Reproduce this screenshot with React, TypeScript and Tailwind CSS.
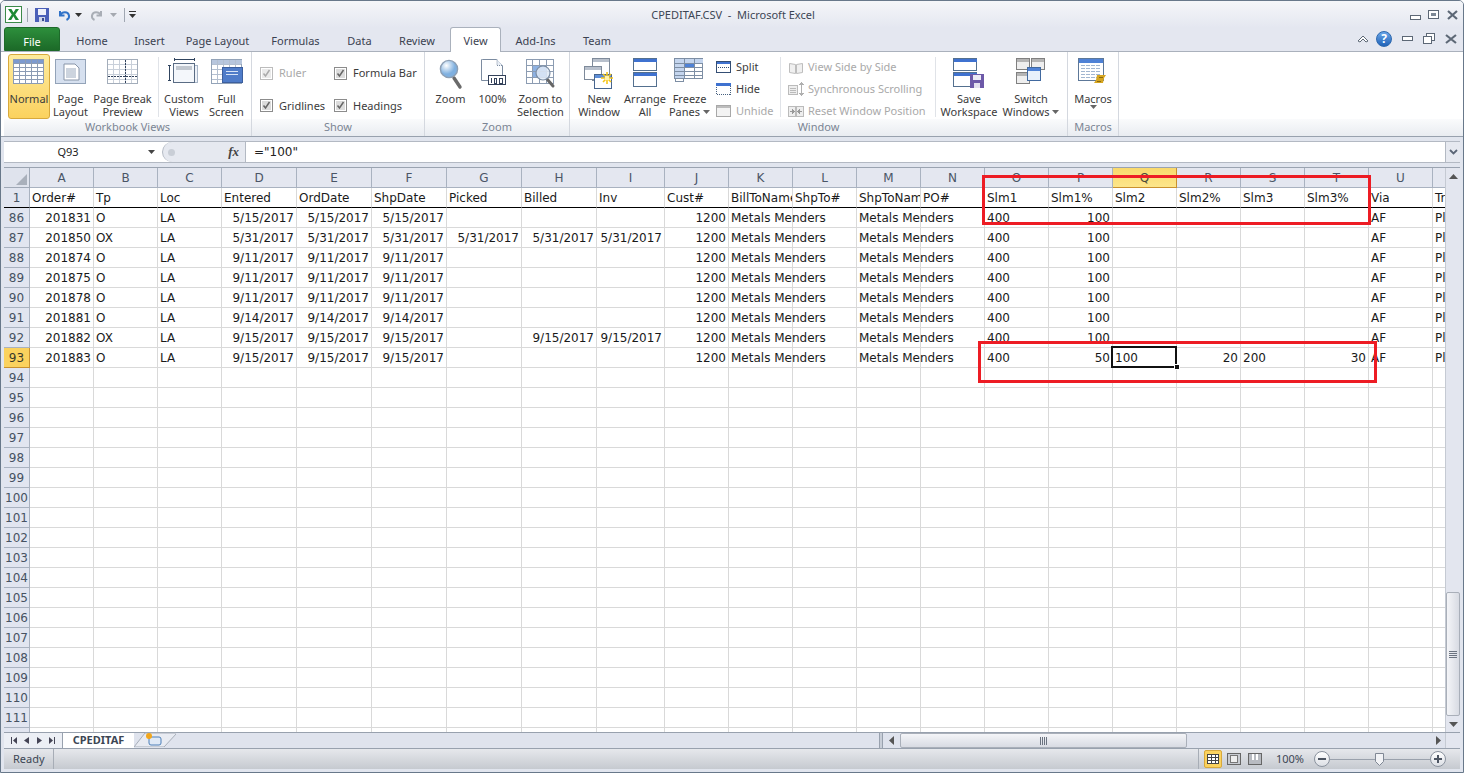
import React from "react";

const UI = { fontFamily: '"Noto Sans", sans-serif' };
const CELL = { fontFamily: '"DejaVu Sans", sans-serif' };

const COLS: [string, number][] = [
  ["A", 64], ["B", 64], ["C", 64], ["D", 75], ["E", 75], ["F", 75], ["G", 75], ["H", 75], ["I", 68], ["J", 64], ["K", 64],
  ["L", 64], ["M", 64], ["N", 64], ["O", 64], ["P", 64], ["Q", 64], ["R", 64], ["S", 64], ["T", 64], ["U", 64], ["V", 64],
];

type C = { t: string; r?: boolean };
const l = (t: string): C => ({ t });
const r = (t: string): C => ({ t, r: true });

function row(order: string, tp: string, d1: string, d2: string, d3: string, pick: string, bill: string, inv: string, s: C[]): C[] {
  return [r(order), l(tp), l("LA"), r(d1), r(d2), r(d3), r(pick), r(bill), r(inv), r("1200"), l("Metals Menders"), l(""), l("Metals Menders"), l(""), ...s, l("AF"), l("Pl")];
}
const std: C[] = [l("400"), r("100"), l(""), l(""), l(""), l("")];

const ROWS: { n: string; c: C[] }[] = [
  { n: "1", c: ["Order#", "Tp", "Loc", "Entered", "OrdDate", "ShpDate", "Picked", "Billed", "Inv", "Cust#", "BillToName", "ShpTo#", "ShpToName", "PO#", "Slm1", "Slm1%", "Slm2", "Slm2%", "Slm3", "Slm3%", "Via", "Trk"].map(l) },
  { n: "86", c: row("201831", "O", "5/15/2017", "5/15/2017", "5/15/2017", "", "", "", std) },
  { n: "87", c: row("201850", "OX", "5/31/2017", "5/31/2017", "5/31/2017", "5/31/2017", "5/31/2017", "5/31/2017", std) },
  { n: "88", c: row("201874", "O", "9/11/2017", "9/11/2017", "9/11/2017", "", "", "", std) },
  { n: "89", c: row("201875", "O", "9/11/2017", "9/11/2017", "9/11/2017", "", "", "", std) },
  { n: "90", c: row("201878", "O", "9/11/2017", "9/11/2017", "9/11/2017", "", "", "", std) },
  { n: "91", c: row("201881", "O", "9/14/2017", "9/14/2017", "9/14/2017", "", "", "", std) },
  { n: "92", c: row("201882", "OX", "9/15/2017", "9/15/2017", "9/15/2017", "", "9/15/2017", "9/15/2017", std) },
  { n: "93", c: row("201883", "O", "9/15/2017", "9/15/2017", "9/15/2017", "", "", "", [l("400"), r("50"), l("100"), r("20"), l("200"), r("30")]) },
  ...Array.from({ length: 18 }, (_, i) => ({ n: String(94 + i), c: [] as C[] })),
  { n: "", c: [] },
];

function GridSvg({ w, h, x, y, cw, ch, cols, rows, stroke = "#8b9bb4", head = "#6f90c8" }: { w: number; h: number; x: number; y: number; cw: number; ch: number; cols: number; rows: number; stroke?: string; head?: string }) {
  return (
    <svg width={w} height={h} shapeRendering="crispEdges" className="block">
      <rect x={x} y={y} width={cw * cols} height={ch} fill={head} />
      <rect x={x} y={y + ch} width={cw * cols} height={ch * (rows - 1)} fill="#fff" />
      {Array.from({ length: cols + 1 }, (_, i) => <line key={i} x1={x + i * cw + 0.5} x2={x + i * cw + 0.5} y1={y} y2={y + ch * rows} stroke={stroke} />)}
      {Array.from({ length: rows + 1 }, (_, i) => <line key={i} y1={y + i * ch + 0.5} y2={y + i * ch + 0.5} x1={x} x2={x + cw * cols} stroke={stroke} />)}
    </svg>
  );
}

const Win = ({ x, y, w, h, bar = "#b8c0cc", frame = "#7e8a9a", body = "#fff" }: { x: number; y: number; w: number; h: number; bar?: string; frame?: string; body?: string }) => (
  <g shapeRendering="crispEdges">
    <rect x={x + 0.5} y={y + 0.5} width={w} height={h} fill={body} stroke={frame} />
    <rect x={x + 1} y={y + 1} width={w - 1} height={3} fill={bar} />
  </g>
);

const PageLayoutIcon = () => (
  <svg width="32" height="28" className="block">
    <rect x="0.5" y="1.5" width="30" height="24" fill="#d6e0ef" stroke="#93a3b8" />
    <path d="M9 6h11l4 4v12H9z" fill="#fff" stroke="#8895a8" />
    <path d="M11 11h10M11 13h10M11 15h10M11 17h10M11 19h10" stroke="#9aa9bd" />
  </svg>
);
const PageBreakIcon = () => (
  <svg width="32" height="28" shapeRendering="crispEdges" className="block">
    <rect x="0.5" y="1.5" width="30" height="24" fill="#fff" stroke="#a3adba" />
    {[6, 12, 18, 24].map(v => <line key={v} x1={v + 0.5} x2={v + 0.5} y1="2" y2="25" stroke="#c9d0da" />)}
    {[6, 11, 16, 21].map(v => <line key={v} y1={v + 0.5} y2={v + 0.5} x1="1" x2="30" stroke="#c9d0da" />)}
    <line x1="18.5" x2="18.5" y1="2" y2="25" stroke="#30405a" strokeDasharray="2 1" />
    <line x1="1" x2="30" y1="18.5" y2="18.5" stroke="#30405a" strokeDasharray="2 1" />
  </svg>
);
const CustomViewsIcon = () => (
  <svg width="32" height="28" className="block" shapeRendering="crispEdges">
    <path d="M1.5 7v16M0 7.5h3M0 22.5h3M6 1.5h21M6.5 0v3M26.5 0v3" stroke="#30445e" fill="none" />
    <rect x="24.5" y="7.5" width="5" height="17" fill="#eef2f8" stroke="#a7b5c7" />
    <rect x="5.5" y="5.5" width="21" height="19" fill="#f4f7fb" stroke="#5a6c84" />
    <rect x="8" y="8" width="16" height="4" fill="#c2c8d0" />
  </svg>
);
const FullScreenIcon = () => (
  <svg width="32" height="28" shapeRendering="crispEdges" className="block">
    <rect x="0.5" y="1.5" width="30" height="24" fill="#fff" stroke="#93a3b8" />
    <rect x="1" y="2" width="30" height="4" fill="#b7c6dd" />
    {[6, 12, 18, 24].map(v => <line key={v} x1={v + 0.5} x2={v + 0.5} y1="2" y2="25" stroke="#b3bfd0" />)}
    {[6, 11, 16, 21].map(v => <line key={v} y1={v + 0.5} y2={v + 0.5} x1="1" x2="30" stroke="#b3bfd0" />)}
    <rect x="11.5" y="9.5" width="20" height="15" fill="#4f7cc9" stroke="#3c5f9e" />
    <path d="M15 13h12M15 16h12" stroke="#d7e4f7" />
  </svg>
);
const ZoomIcon = () => (
  <svg width="24" height="32" className="block">
    <defs><radialGradient id="zg" cx="0.35" cy="0.3"><stop offset="0" stopColor="#fff" /><stop offset="1" stopColor="#7fb0e0" /></radialGradient></defs>
    <path d="M15 20l6 9" stroke="#6a6a6a" strokeWidth="3.4" strokeLinecap="round" />
    <circle cx="10" cy="11" r="8.6" fill="url(#zg)" stroke="#8d9fb4" strokeWidth="1.4" />
  </svg>
);
const HundredIcon = () => (
  <svg width="28" height="30" className="block">
    <path d="M2.5 1.5h15l6 6v13" fill="#fff" stroke="#7b8ba0" />
    <path d="M2.5 1.5v21h21v-15" fill="#fdfeff" stroke="#7b8ba0" />
    <path d="M18 1.5v6h5.5" fill="#e8eef6" stroke="#7b8ba0" strokeDasharray="1 1" />
    <rect x="9.5" y="17.5" width="17" height="9" fill="#fff" stroke="#33415a" />
    <path d="M12 20v5M15 20h2v5h-2zM20 20h3v5h-3z" stroke="#33415a" fill="none" shapeRendering="crispEdges" />
  </svg>
);
const ZoomSelIcon = () => (
  <svg width="30" height="32" className="block" shapeRendering="geometricPrecision">
    <rect x="0.5" y="1.5" width="27" height="24" fill="#fff" stroke="#8c9cb2" />
    <rect x="6" y="7" width="14" height="13" fill="#8db1e2" />
    {[6, 13, 20].map(v => <line key={v} x1={v + 0.5} x2={v + 0.5} y1="2" y2="25" stroke="#8c9cb2" />)}
    {[7, 13, 19].map(v => <line key={v} y1={v + 0.5} y2={v + 0.5} x1="1" x2="27" stroke="#8c9cb2" />)}
    <path d="M21 21l6 7" stroke="#666" strokeWidth="3" strokeLinecap="round" />
    <circle cx="17" cy="15" r="7" fill="#dfeaf7" fillOpacity="0.85" stroke="#7a8ca3" strokeWidth="1.2" />
  </svg>
);
const NewWindowIcon = () => (
  <svg width="32" height="32" className="block">
    <Win x={9} y={0} w={17} h={22} />
    <Win x={1} y={8} w={17} h={13} />
    <Win x={11} y={16} w={17} h={14} bar="#5f8fd8" frame="#47658f" />
    <g stroke="#f6c518" strokeWidth="1.6"><path d="M24 14v12M18 20h12M20 16l8 8M28 16l-8 8" /></g>
    <rect x="22" y="18" width="4" height="4" fill="#fff3b0" />
  </svg>
);
const ArrangeIcon = () => (
  <svg width="25" height="32" shapeRendering="crispEdges" className="block">
    <rect x="0.5" y="0.5" width="23" height="12" fill="#fff" stroke="#54708f" />
    <rect x="1" y="1" width="23" height="3" fill="#3f72d0" />
    <rect x="0.5" y="14.5" width="23" height="14" fill="#fff" stroke="#54708f" />
    <rect x="1" y="15" width="23" height="3" fill="#3f72d0" />
  </svg>
);
const FreezeIcon = () => (
  <svg width="32" height="28" shapeRendering="crispEdges" className="block">
    <rect x="0.5" y="0.5" width="28" height="20" fill="#fff" stroke="#7d8ea4" />
    <rect x="1" y="1" width="28" height="4" fill="#c4d5ee" />
    <rect x="1" y="5" width="9" height="16" fill="#c4d5ee" />
    <rect x="10" y="5" width="10" height="4" fill="#4f82d6" />
    {[10, 20].map(v => <line key={v} x1={v + 0.5} x2={v + 0.5} y1="1" y2="21" stroke="#7d8ea4" />)}
    {[5, 9, 13, 17].map(v => <line key={v} y1={v + 0.5} y2={v + 0.5} x1="1" x2="29" stroke="#7d8ea4" />)}
    <rect x="1.5" y="20.5" width="8" height="3" fill="#fff" stroke="#7d8ea4" />
  </svg>
);
const SplitIcon = () => (
  <svg width="16" height="13" shapeRendering="crispEdges" className="block">
    <rect x="0.5" y="0.5" width="14" height="11" fill="#fff" stroke="#344e74" />
    <rect x="1" y="1" width="13" height="2" fill="#3f72d0" />
    <line x1="2" x2="13" y1="6.5" y2="6.5" stroke="#344e74" strokeDasharray="1 1" />
  </svg>
);
const HideIcon = () => (
  <svg width="16" height="13" shapeRendering="crispEdges" className="block">
    <rect x="0.5" y="0.5" width="14" height="11" fill="#fff" stroke="#46607f" strokeDasharray="1 1" />
    <rect x="0" y="0" width="15" height="3" fill="#3f72d0" />
  </svg>
);
const UnhideIcon = () => (
  <svg width="16" height="13" shapeRendering="crispEdges" className="block">
    <rect x="0.5" y="0.5" width="14" height="11" fill="#f3f3f3" stroke="#a8a8a8" />
    <rect x="1" y="1" width="13" height="2" fill="#bdbdbd" />
  </svg>
);
const SideIcon = () => (
  <svg width="16" height="13" className="block" fill="#f0f0f0" stroke="#bdbdbd">
    <path d="M1.5 2.5l6 1v9l-6-1zM8.5 3.5l6-1v9l-6 1z" />
  </svg>
);
const SyncIcon = () => (
  <svg width="16" height="14" className="block" shapeRendering="crispEdges">
    <rect x="0.5" y="3.5" width="9" height="9" fill="#eee" stroke="#bbb" />
    <path d="M2 6h6M2 8h6M2 10h6" stroke="#bbb" />
    <path d="M13.5 1v12M11.5 3l2-2 2 2M11.5 11l2 2 2-2" stroke="#b0b0b0" fill="none" />
  </svg>
);
const ResetIcon = () => (
  <svg width="16" height="13" className="block" shapeRendering="crispEdges">
    <rect x="0.5" y="1.5" width="7" height="10" fill="#eee" stroke="#bbb" />
    <rect x="8.5" y="1.5" width="7" height="10" fill="#eee" stroke="#bbb" />
    <path d="M2 6.5h4M4 4.5l2 2-2 2M14 6.5h-4M12 4.5l-2 2 2 2" stroke="#999" fill="none" />
  </svg>
);
const SaveWsIcon = () => (
  <svg width="32" height="32" className="block">
    <g shapeRendering="crispEdges">
      <rect x="0.5" y="0.5" width="23" height="12" fill="#fff" stroke="#54708f" />
      <rect x="1" y="1" width="23" height="3" fill="#3f72d0" />
      <rect x="0.5" y="14.5" width="23" height="14" fill="#fff" stroke="#54708f" />
      <rect x="1" y="15" width="23" height="3" fill="#3f72d0" />
      <rect x="17" y="16" width="14" height="14" fill="#6d59a8" />
      <rect x="20" y="17" width="8" height="5" fill="#eceaf4" />
      <rect x="21" y="25" width="6" height="5" fill="#e3e0ef" />
    </g>
  </svg>
);
const SwitchIcon = () => (
  <svg width="30" height="28" shapeRendering="crispEdges" className="block">
    <rect x="0.5" y="0.5" width="13" height="11" fill="#eee" stroke="#808080" />
    <rect x="1" y="1" width="12" height="3" fill="#b4b4b4" />
    <rect x="15.5" y="0.5" width="13" height="11" fill="#eee" stroke="#808080" />
    <rect x="16" y="1" width="12" height="3" fill="#b4b4b4" />
    <rect x="0.5" y="14.5" width="13" height="11" fill="#eee" stroke="#808080" />
    <rect x="1" y="15" width="12" height="3" fill="#b4b4b4" />
    <rect x="11.5" y="9.5" width="13" height="13" fill="#e8f0fb" stroke="#41699f" />
    <rect x="12" y="10" width="12" height="3" fill="#4f82d6" />
  </svg>
);
const MacroIcon = () => (
  <svg width="30" height="28" className="block" shapeRendering="crispEdges">
    <rect x="0.5" y="0.5" width="25" height="22" fill="#fff" stroke="#5d7898" />
    <rect x="1" y="1" width="24" height="4" fill="#4f82d6" />
    {[7, 10, 13, 16, 19].map(v => <line key={v} x1="3" x2="23" y1={v + 0.5} y2={v + 0.5} stroke="#a2b6d0" strokeDasharray="4 1" />)}
    <path d="M19 17h9l-2 3-1 5h-9l2-3z" fill="#d6a520" shapeRendering="auto" />
    <path d="M21 19h4M19 23h4" stroke="#8a6a10" />
  </svg>
);

const Tri = ({ c = "#555" }: { c?: string }) => (
  <svg width="7" height="4" className="block"><path d="M0 0h7L3.5 4z" fill={c} /></svg>
);

function Check({ dim }: { dim?: boolean }) {
  return (
    <svg width="13" height="13" className="block shrink-0">
      <rect x="0.5" y="0.5" width="12" height="12" fill="#fff" stroke={dim ? "#bcbcbc" : "#8c8c8c"} />
      <rect x="2" y="2" width="9" height="9" fill={dim ? "#eaeaea" : "#dcdcdc"} />
      <path d="M3.5 6.5l2 2.5 4-6" fill="none" stroke={dim ? "#aaa" : "#666"} strokeWidth="1.5" />
    </svg>
  );
}

function Big({ w, icon, a, b, active, caret, iconH = 34 }: { w: number; icon: React.ReactNode; a: string; b?: string; active?: boolean; caret?: boolean; iconH?: number }) {
  return (
    <div style={{ width: w }} className={`h-[65px] shrink-0 flex flex-col items-center text-[11px] leading-[13px] text-[#3b3b3b] ${active ? "rounded-[3px] border border-[#d8a93c] bg-gradient-to-b from-[#fdeb9d] to-[#fbd25e]" : "border border-transparent"}`}>
      <div style={{ height: iconH }} className="flex items-start justify-center pt-[3px]">{icon}</div>
      <div className="whitespace-nowrap mt-[3px]">{a}</div>
      <div className="whitespace-nowrap flex items-center gap-[3px]">{b}{caret && <Tri c="#666" />}</div>
    </div>
  );
}

function Small({ icon, text, dim }: { icon: React.ReactNode; text: string; dim?: boolean }) {
  return (
    <div className={`h-[22px] flex items-center gap-[4px] text-[11px] whitespace-nowrap ${dim ? "text-[#a9a9a9]" : "text-[#3b3b3b]"}`}>
      <div className="w-[16px] flex justify-center">{icon}</div>{text}
    </div>
  );
}

function Group({ w, label, children }: { w: number; label: string; children: React.ReactNode }) {
  return (
    <div style={{ width: w }} className="shrink-0 h-full flex flex-col border-r border-[#d4d8df]">
      <div className="h-[68px] pt-[2px] flex items-start">{children}</div>
      <div className="flex-1 flex items-center justify-center text-[11px] text-[#7b8594] bg-gradient-to-b from-[#fafbfc] to-[#e9ecf1] mt-[-1px]">{label}</div>
    </div>
  );
}

const Sep = () => <div className="w-px h-[60px] mt-[3px] bg-[#e0e3e8] shrink-0" />;

const CheckItem = ({ text, dim }: { text: string; dim?: boolean }) => (
  <div className={`flex items-center gap-[6px] text-[11px] whitespace-nowrap ${dim ? "text-[#a9a9a9]" : "text-[#3b3b3b]"}`}><Check dim={dim} />{text}</div>
);

const Tab = ({ t, w }: { t: string; w: number }) => (
  <div style={{ width: w }} className="shrink-0 text-center text-[11px] text-[#3b4250] whitespace-nowrap pt-[6px]">{t}</div>
);

function SheetGrid() {
  return (
    <div className="flex-1 min-w-0 overflow-hidden bg-white" style={CELL}>
      <div className="flex h-[20px] w-[1600px]">
        <div className="w-[26px] shrink-0 bg-[#dfe3ed] border-r border-b border-[#9fa8b6] flex items-end justify-end p-[2px]">
          <svg width="11" height="11" className="block"><path d="M11 0v11H0z" fill="#a9b0bb" /></svg>
        </div>
        {COLS.map(([n, w]) => (
          <div key={n} style={{ width: w }} className={`shrink-0 flex items-center justify-center text-[12px] border-r border-b ${n === "Q" ? "bg-gradient-to-b from-[#f9d96c] to-[#fde68a] border-[#c9912e] text-[#4a4a3a]" : "bg-[#e4e7f0] border-[#a9b2c0] text-[#4a5566]"}`}>{n}</div>
        ))}
      </div>
      {ROWS.map((rw, idx) => (
        <div key={idx} className="flex h-[20px] w-[1600px]">
          <div className={`w-[26px] shrink-0 flex items-center justify-center text-[12px] border-r border-b ${rw.n === "93" ? "bg-[#fbd25e] border-[#c9912e] text-[#3a3a2a]" : "bg-[#e1e5f0] border-[#a9b2c0] text-[#465262]"} ${idx === 0 ? "border-b-black" : ""}`}>{rw.n}</div>
          {COLS.map(([n, w], i) => {
            const cell = rw.c[i];
            const spill = cell && cell.t === "Metals Menders";
            return (
              <div key={n} style={{ width: w }} className={`shrink-0 h-full flex items-center px-[2px] text-[12px] leading-none text-[#1a1a1a] whitespace-nowrap border-r border-b border-[#d9d9d9] ${idx === 0 ? "border-b-black" : ""} ${spill ? "overflow-visible" : "overflow-hidden"} ${cell?.r ? "justify-end" : "justify-start"}`}>
                {cell?.t}
              </div>
            );
          })}
        </div>
      ))}
    </div>
  );
}

export default function App() {
  return (
    <div className="relative w-[1464px] h-[773px] overflow-hidden bg-[#e1e5ee] border border-[#68788a] rounded-t-[5px] flex flex-col" style={UI}>
      {/* title bar */}
      <div className="h-[27px] shrink-0 flex items-center bg-gradient-to-b from-[#f5f6f9] to-[#e4e7f0] relative">
        <div className="flex items-center pl-[4px]">
          <svg width="17" height="17" className="block">
            <rect x="0.5" y="0.5" width="16" height="16" fill="#fff" stroke="#3c8a4a" />
            <path d="M3 3h3.4L8.5 6.6 10.7 3H14l-3.8 5.4L14 14h-3.4L8.4 10.300 6.200 14H3l3.800-5.600z" fill="#1f8a35" />
          </svg>
          <div className="w-px h-[14px] bg-[#a0a7b2] mx-[5px]" />
          <svg width="16" height="16" className="block ml-[1px]" shapeRendering="crispEdges">
            <rect x="1" y="1" width="14" height="14" fill="#4a5fb8" />
            <rect x="4" y="2" width="8" height="6" fill="#eef1fa" />
            <rect x="5" y="10" width="6" height="5" fill="#cfd6ea" />
            <rect x="8" y="11" width="2" height="3" fill="#3a4a8c" />
          </svg>
          <svg width="14" height="14" className="block ml-[7px]" fill="none">
            <path d="M3 3v4.500h4.500" stroke="#2f72c8" strokeWidth="2" />
            <path d="M3.500 7C5 3.500 11 3 12 7.500c.4 2-1 3.800-2.500 4.500" stroke="#2f72c8" strokeWidth="2" />
          </svg>
          <div className="ml-[4px]"><Tri c="#333" /></div>
          <svg width="14" height="14" className="block ml-[8px]" fill="none">
            <path d="M11 3v4.500H6.500" stroke="#a9aeb6" strokeWidth="2" />
            <path d="M10.500 7C9 3.500 3 3 2 7.500c-.4 2 1 3.800 2.500 4.500" stroke="#a9aeb6" strokeWidth="2" />
          </svg>
          <div className="ml-[6px]"><Tri c="#a5a9b0" /></div>
          <div className="w-px h-[14px] bg-[#a0a7b2] ml-[7px] mr-[4px]" />
          <div className="flex flex-col items-center gap-[2px]">
            <div className="w-[7px] h-px bg-[#333]" />
            <Tri c="#333" />
          </div>
        </div>
        <div className="flex-1" />
        <div className="absolute left-0 right-0 top-[6px] text-center text-[11px] text-[#3c4654] whitespace-pre pl-[2px]">CPEDITAF.CSV  -  Microsoft Excel</div>
        <div className="flex items-center gap-[7px] pr-[5px]">
          <svg width="11" height="11" className="block" shapeRendering="crispEdges"><rect x="0.5" y="6.500" width="10" height="4" fill="#fff" stroke="#5d6876" /></svg>
          <svg width="11" height="10" className="block" shapeRendering="crispEdges"><rect x="0.5" y="0.5" width="10" height="8" fill="#fff" stroke="#5d6876" /><rect x="3" y="3" width="5" height="3" fill="#7d8895" /></svg>
          <svg width="11" height="10" className="block ml-[1px]"><path d="M1 1l9 8M10 1l-9 8" stroke="#5d6876" strokeWidth="2.200" /></svg>
        </div>
      </div>

      {/* tabs */}
      <div className="h-[24px] shrink-0 flex items-end bg-[#e4e7f0] border-b border-[#aab1bc] relative">
        <div className="flex h-[24px] ml-[3px] w-full">
          <div className="w-[56px] h-[24px] shrink-0 bg-gradient-to-b from-[#2d8f3c] to-[#1c6a28] rounded-t-[3px] text-white text-[11px] text-center pt-[6px] border border-[#1d6a2a]">File</div>
          <Tab t="Home" w={64} />
          <Tab t="Insert" w={51} />
          <Tab t="Page Layout" w={85} />
          <Tab t="Formulas" w={71} />
          <Tab t="Data" w={57} />
          <Tab t="Review" w={58} />
          <div className="w-[4px] shrink-0" />
          <div className="w-[51px] h-[25px] shrink-0 bg-white border border-b-0 border-[#aab1bc] rounded-t-[3px] text-center text-[11px] text-[#3b4250] pt-[5px] z-10">View</div>
          <Tab t="Add-Ins" w={69} />
          <Tab t="Team" w={54} />
          <div className="flex-1" />
          <div className="flex items-center gap-[9px] pr-[6px] pb-[1px]">
            <svg width="12" height="9" className="block" fill="none"><path d="M1 7l5-5 5 5-2 1-3-3-3 3z" fill="#fff" stroke="#5d6876" /></svg>
            <div className="w-[16px] h-[16px] rounded-full bg-gradient-to-b from-[#6aa6e8] to-[#1f62b8] border border-[#2d68ae] text-white text-[12px] font-bold leading-[14px] text-center ml-[-2px]">?</div>
            <svg width="11" height="6" className="block ml-[1px]" shapeRendering="crispEdges"><rect x="0.5" y="0.5" width="10" height="4" fill="#fff" stroke="#5d6876" /></svg>
            <svg width="12" height="11" className="block ml-[1px]" shapeRendering="crispEdges" fill="#fff" stroke="#5d6876"><rect x="3.500" y="0.5" width="8" height="7" /><rect x="0.5" y="3.500" width="8" height="7" /></svg>
            <svg width="12" height="10" className="block ml-[1px]"><path d="M1 1l10 8M11 1L1 9" stroke="#5d6876" strokeWidth="2.200" /></svg>
          </div>
        </div>
      </div>

      {/* ribbon */}
      <div className="h-[85px] shrink-0 bg-white border-b border-[#98a1ae] flex pl-[3px] overflow-hidden">
        <Group w={248} label="Workbook Views">
          <div className="w-[4px]" />
          <Big w={42} active icon={<GridSvg w={32} h={28} x={0} y={1} cw={6} ch={4} cols={5} rows={6} head="#7c9ad0" />} a="Normal" />
          <Big w={41} icon={<PageLayoutIcon />} a="Page" b="Layout" />
          <Big w={63} icon={<PageBreakIcon />} a="Page Break" b="Preview" />
          <div className="w-[4px]" /><Sep /><div className="w-[4px]" />
          <Big w={42} icon={<CustomViewsIcon />} a="Custom" b="Views" />
          <Big w={43} icon={<FullScreenIcon />} a="Full" b="Screen" />
        </Group>
        <Group w={173} label="Show">
          <div className="pl-[8px] w-[82px] flex flex-col gap-[16px] pt-[11px]">
            <CheckItem text="Ruler" dim />
            <CheckItem text="Gridlines" />
          </div>
          <div className="flex flex-col gap-[16px] pt-[11px]">
            <CheckItem text="Formula Bar" />
            <CheckItem text="Headings" />
          </div>
        </Group>
        <Group w={145} label="Zoom">
          <div className="w-[5px]" />
          <Big w={41} icon={<ZoomIcon />} a="Zoom" />
          <Big w={43} icon={<HundredIcon />} a="100%" />
          <Big w={53} icon={<ZoomSelIcon />} a="Zoom to" b="Selection" />
        </Group>
        <Group w={498} label="Window">
          <div className="w-[5px]" />
          <Big w={48} icon={<NewWindowIcon />} a="New" b="Window" />
          <Big w={44} icon={<ArrangeIcon />} a="Arrange" b="All" />
          <Big w={45} icon={<FreezeIcon />} a="Freeze" b="Panes" caret />
          <div className="w-[4px]" />
          <div className="w-[64px] flex flex-col pt-[2px]">
            <Small icon={<SplitIcon />} text="Split" />
            <Small icon={<HideIcon />} text="Hide" />
            <Small icon={<UnhideIcon />} text="Unhide" dim />
          </div>
          <Sep />
          <div className="w-[7px]" />
          <div className="w-[147px] flex flex-col pt-[2px]">
            <Small icon={<SideIcon />} text="View Side by Side" dim />
            <Small icon={<SyncIcon />} text="Synchronous Scrolling" dim />
            <Small icon={<ResetIcon />} text="Reset Window Position" dim />
          </div>
          <Sep />
          <div className="w-[2px]" />
          <Big w={62} icon={<SaveWsIcon />} a="Save" b="Workspace" />
          <Big w={62} icon={<SwitchIcon />} a="Switch" b="Windows" caret />
        </Group>
        <Group w={51} label="Macros">
          <Big w={50} icon={<MacroIcon />} a="Macros" b=" " caret />
        </Group>
        <div className="flex-1 flex flex-col">
          <div className="h-[67px]" />
          <div className="flex-1 bg-gradient-to-b from-[#fafbfc] to-[#e9ecf1]" />
        </div>
      </div>

      {/* formula bar */}
      <div className="h-[4px] shrink-0 bg-[#e1e5ee]" />
      <div className="h-[22px] shrink-0 flex ml-[3px] mr-[3px] bg-white border-y border-[#b3b9c3]">
        <div className="w-[158px] shrink-0 flex items-center text-[11px] text-[#222] relative">
          <div className="flex-1 text-center pr-[16px]">Q93</div>
          <div className="pr-[7px]"><Tri c="#444" /></div>
        </div>
        <div className="w-[84px] shrink-0 bg-[#e6e9f0] rounded-l-[11px] border-l border-[#b3b9c3] border-r flex items-center justify-between pl-[5px] pr-[6px]">
          <div className="w-[7px] h-[7px] rounded-full bg-[#c9ced6]" />
          <span className="text-[13px] italic font-bold text-[#444]" style={{ fontFamily: '"Liberation Serif", serif' }}>fx</span>
        </div>
        <div className="flex-1 pl-[8px] flex items-center text-[12px] text-[#222]" style={CELL}>="100"</div>
        <div className="w-[15px] shrink-0 bg-[#e6e9f0] border-l border-[#b3b9c3] flex items-center justify-center">
          <svg width="9" height="6" fill="none" className="block"><path d="M1 1l3.500 3.500L8 1" stroke="#5b6676" strokeWidth="1.800" /></svg>
        </div>
      </div>
      <div className="h-[4px] shrink-0 bg-[#e1e5ee]" />

      {/* grid + scrollbar */}
      <div className="h-[565px] shrink-0 flex ml-[3px] mr-[3px] border-t border-[#9aa3b0] overflow-hidden">
        <SheetGrid />
        <div className="w-[15px] shrink-0 flex flex-col bg-[#e3e6ef] border-l border-[#c5cad3]">
          <div className="h-[17px] flex items-center justify-center"><svg width="9" height="5" className="block"><path d="M0 5h9L4.500 0z" fill="#555" /></svg></div>
          <div className="h-[407px]" />
          <div className="h-[124px] bg-gradient-to-r from-[#f4f5f8] to-[#d8dbe3] border border-[#a9afb9] rounded-[2px] flex flex-col items-center justify-center gap-[1px]">
            <div className="w-[8px] h-px bg-[#6b7380]" /><div className="w-[8px] h-px bg-[#6b7380]" /><div className="w-[8px] h-px bg-[#6b7380]" /><div className="w-[8px] h-px bg-[#6b7380]" />
          </div>
          <div className="flex-1 flex items-center justify-center"><svg width="9" height="5" className="block"><path d="M0 0h9L4.500 5z" fill="#555" /></svg></div>
        </div>
      </div>

      {/* sheet tabs + h-scroll */}
      <div className="h-[16px] shrink-0 flex ml-[3px] mr-[3px] bg-[#dfe3ed] border-t border-[#98a1ae] items-stretch text-[#3c4654]">
        <div className="w-[59px] shrink-0 flex items-center justify-around px-[3px] border-r border-[#98a1ae] bg-[#eceff5]">
          <svg width="6" height="7" className="block"><path d="M0 0h1v7H0zM6 0v7L2 3.500z" fill="#445" /></svg>
          <svg width="5" height="7" className="block"><path d="M5 0v7L0 3.500z" fill="#445" /></svg>
          <svg width="5" height="7" className="block"><path d="M0 0v7l5-3.500z" fill="#445" /></svg>
          <svg width="6" height="7" className="block"><path d="M5 0h1v7H5zM0 0v7l4-3.500z" fill="#445" /></svg>
        </div>
        <div className="w-[71px] shrink-0 bg-white text-[11px] font-bold text-center text-[#3c4654] leading-[14px] whitespace-nowrap">CPEDITAF</div>
        <svg width="42" height="15" className="block shrink-0 mt-[-1px]">
          <path d="M0 15L11 1h32L30 15z" fill="#e8ebf2" stroke="#a7aeb9" />
          <rect x="15" y="5" width="12" height="8" rx="2" fill="#dfe9f6" stroke="#4c7fb8" />
          <circle cx="15" cy="4" r="3" fill="#f2a71c" />
        </svg>
        <div className="flex-1" />
        <div className="w-[4px] shrink-0 bg-[#c8ced8] border-x border-[#98a1ae]" />
        <div className="w-[17px] shrink-0 flex items-center justify-center"><svg width="5" height="9" className="block"><path d="M5 0v9L0 4.500z" fill="#555" /></svg></div>
        <div className="w-[287px] shrink-0 bg-gradient-to-b from-[#f4f5f8] to-[#d8dbe3] border border-[#a9afb9] rounded-[2px] flex items-center justify-center gap-[1px]">
          <div className="w-px h-[8px] bg-[#6b7380]" /><div className="w-px h-[8px] bg-[#6b7380]" /><div className="w-px h-[8px] bg-[#6b7380]" /><div className="w-px h-[8px] bg-[#6b7380]" />
        </div>
        <div className="w-[258px] shrink-0 flex items-center justify-end pr-[4px]"><svg width="5" height="9" className="block"><path d="M0 0v9l5-4.500z" fill="#555" /></svg></div>
        <div className="w-[15px] shrink-0 bg-[#e3e6ef] border-l border-[#c5cad3]" />
      </div>

      {/* status bar */}
      <div className="flex-1 flex ml-[3px] mr-[3px] mb-[3px] items-center bg-gradient-to-b from-[#e6e8ec] to-[#c6cad0] border-t border-[#98a1ae] text-[11px] text-[#3c4654]">
        <div className="w-[50px] shrink-0 pl-[9px] h-full flex items-center border-r border-[#a7adb6]">Ready</div>
        <div className="flex-1 h-full" />
        <div className="w-px h-full bg-[#a7adb6] mr-[5px]" />
        <div className="w-[18px] h-[18px] bg-[#fbd25e] border border-[#d8a93c] rounded-[2px] flex items-center justify-center shrink-0">
          <svg width="12" height="10" shapeRendering="crispEdges" className="block" fill="none" stroke="#444"><rect x="0.5" y="0.5" width="11" height="9" fill="#fff" /><path d="M4.500 0v10M8 0v10M0 3.500h12M0 6.500h12" /></svg>
        </div>
        <div className="w-[21px] flex justify-center shrink-0 ml-[1px]">
          <svg width="14" height="12" className="block" shapeRendering="crispEdges"><rect x="0.5" y="0.5" width="13" height="11" fill="#c9ccd2" stroke="#666" /><rect x="3.500" y="2.500" width="7" height="7" fill="#eee" stroke="#777" /></svg>
        </div>
        <div className="w-[21px] flex justify-center shrink-0">
          <svg width="14" height="12" className="block" shapeRendering="crispEdges"><rect x="0.5" y="0.5" width="13" height="11" fill="#b8bbc1" stroke="#666" /><rect x="4" y="1" width="2" height="6" fill="#fff" /><rect x="8" y="1" width="2" height="6" fill="#fff" /></svg>
        </div>
        <div className="w-[36px] shrink-0 ml-[7px] text-center">100%</div>
        <div className="w-[16px] h-[16px] rounded-full bg-gradient-to-b from-white to-[#dcdfe5] border border-[#8a929e] flex items-center justify-center shrink-0 ml-[6px]"><div className="w-[8px] h-[2px] bg-[#4d5562]" /></div>
        <div className="w-[100px] shrink-0 flex items-center relative">
          <div className="h-px w-full bg-[#9aa1ac]" />
          <svg width="10" height="13" className="block absolute left-[45px] top-[-6px]"><path d="M.5.500h8v8l-4 4-4-4z" fill="#f2f3f6" stroke="#808895" /></svg>
        </div>
        <div className="w-[16px] h-[16px] rounded-full bg-gradient-to-b from-white to-[#dcdfe5] border border-[#8a929e] flex items-center justify-center shrink-0 relative"><div className="w-[8px] h-[2px] bg-[#4d5562]" /><div className="absolute w-[2px] h-[8px] bg-[#4d5562]" /></div>
        <div className="w-[14px] shrink-0" />
      </div>

      {/* annotations and selection */}
      <div className="absolute left-[981px] top-[174px] w-[389px] h-[50px] border-[3px] border-[#ed1c24]" />
      <div className="absolute left-[977px] top-[340px] w-[399px] h-[42px] border-[3px] border-[#ed1c24]" />
      <div className="absolute left-[1110px] top-[345px] w-[66px] h-[22px] border-2 border-[#111]" />
      <div className="absolute left-[1173px] top-[363px] w-[6px] h-[6px] bg-[#111] border border-white" />
    </div>
  );
}
